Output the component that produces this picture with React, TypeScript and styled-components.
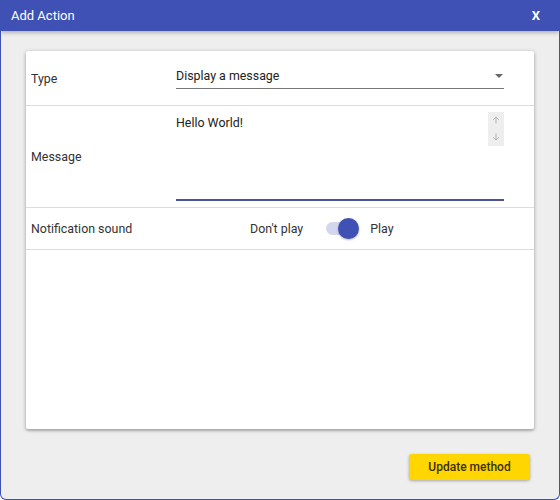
import styled, { createGlobalStyle } from 'styled-components';

const GlobalStyle = createGlobalStyle`
  html, body {
    margin: 0;
    padding: 0;
    background: #ffffff;
  }
  body {
    font-family: Roboto, "Noto Sans", Arial, sans-serif;
  }
`;

const Window = styled.div`
  width: 560px;
  height: 500px;
  box-sizing: border-box;
  display: flex;
  flex-direction: column;
  background: #eeeeee;
  border: 1px solid #3f51b5;
  border-top: none;
  border-radius: 0 0 6px 6px;
  overflow: hidden;
`;

const TitleBar = styled.div`
  height: 31px;
  flex-shrink: 0;
  display: flex;
  align-items: center;
  justify-content: space-between;
  padding: 0 19px 0 10px;
  background: #3f51b5;
  color: #ffffff;
  font-size: 13px;
  box-shadow: 0 2px 4px rgba(0, 0, 0, 0.25);
  position: relative;
  z-index: 1;
`;

const CloseButton = styled.span`
  font-size: 13px;
  font-weight: 700;
  cursor: pointer;
`;

const Body = styled.div`
  flex: 1;
  display: flex;
  flex-direction: column;
  padding: 20px 25px 19px 25px;
`;

const Card = styled.div`
  height: 378px;
  background: #ffffff;
  box-shadow: 0 1px 4px rgba(0, 0, 0, 0.3), 0 2px 2px rgba(0, 0, 0, 0.12);
  border-radius: 2px;
  display: flex;
  flex-direction: column;
`;

const Row = styled.div<{ $height: number }>`
  height: ${(p) => p.$height}px;
  display: flex;
  align-items: center;
  border-bottom: 1px solid #dcdcdc;
  box-sizing: border-box;
`;

const Label = styled.div`
  width: 145px;
  padding-left: 5px;
  font-size: 12.4px;
  color: #333333;
`;

const Field = styled.div`
  width: 328px;
`;

const Select = styled.div`
  height: 26px;
  margin-top: -4px;
  display: flex;
  align-items: center;
  justify-content: space-between;
  border-bottom: 1px solid #777777;
  font-size: 12.4px;
  color: #222222;
  box-sizing: border-box;
`;

const Caret = styled.span`
  width: 0;
  height: 0;
  margin-right: 1px;
  border-left: 4px solid transparent;
  border-right: 4px solid transparent;
  border-top: 4px solid #666666;
`;

const TextAreaBox = styled.div`
  height: 90px;
  margin-top: -2px;
  display: flex;
  justify-content: space-between;
  border-bottom: 2px solid #4a5494;
  box-sizing: border-box;
`;

const TextContent = styled.div`
  padding-top: 4px;
  font-size: 12.4px;
  color: #222222;
`;

const ScrollBar = styled.div`
  width: 16px;
  height: 34px;
  margin-top: 1px;
  background: #eeeeee;
  display: flex;
  flex-direction: column;
  align-items: center;
  justify-content: space-around;
`;

const ToggleGroup = styled.div`
  display: flex;
  align-items: center;
  padding-left: 74px;
  font-size: 12.4px;
  color: #333333;
`;

const Track = styled.div`
  position: relative;
  width: 30px;
  height: 13px;
  margin: 0 14px 0 23px;
  border-radius: 7px;
  background: #d3d6ee;
`;

const Thumb = styled.div`
  position: absolute;
  top: -4px;
  right: -3px;
  width: 21px;
  height: 21px;
  border-radius: 50%;
  background: #3f51b5;
  box-shadow: 0 1px 2px rgba(0, 0, 0, 0.3);
`;

const Footer = styled.div`
  display: flex;
  justify-content: flex-end;
  margin-top: auto;
  padding-right: 4px;
`;

const Button = styled.button`
  width: 121px;
  height: 26px;
  border: none;
  border-radius: 3px;
  background: #ffd600;
  color: #3a3000;
  font-family: Roboto, Arial, sans-serif;
  font-size: 12px;
  font-weight: 500;
  box-shadow: 0 1px 3px rgba(0, 0, 0, 0.3);
  cursor: pointer;
`;

const Arrow = ({ down }: { down?: boolean }) => (
  <svg width="8" height="8" viewBox="0 0 8 8" fill="none" stroke="#b5b5b5" strokeWidth="1">
    {down ? (
      <path d="M4 0.5 V7 M1.2 4.3 L4 7 L6.8 4.3" />
    ) : (
      <path d="M4 7.5 V1 M1.2 3.7 L4 1 L6.8 3.7" />
    )}
  </svg>
);

const App = () => {
  return (
    <>
      <GlobalStyle />
      <Window>
        <TitleBar>
          <span>Add Action</span>
          <CloseButton>X</CloseButton>
        </TitleBar>
        <Body>
          <Card>
            <Row $height={55}>
              <Label>Type</Label>
              <Field>
                <Select>
                  <span>Display a message</span>
                  <Caret />
                </Select>
              </Field>
            </Row>
            <Row $height={102}>
              <Label>Message</Label>
              <Field>
                <TextAreaBox>
                  <TextContent>Hello World!</TextContent>
                  <ScrollBar>
                    <Arrow />
                    <Arrow down />
                  </ScrollBar>
                </TextAreaBox>
              </Field>
            </Row>
            <Row $height={42}>
              <Label>Notification sound</Label>
              <ToggleGroup>
                <span>Don't play</span>
                <Track>
                  <Thumb />
                </Track>
                <span>Play</span>
              </ToggleGroup>
            </Row>
          </Card>
          <Footer>
            <Button>Update method</Button>
          </Footer>
        </Body>
      </Window>
    </>
  );
};

export default App;
